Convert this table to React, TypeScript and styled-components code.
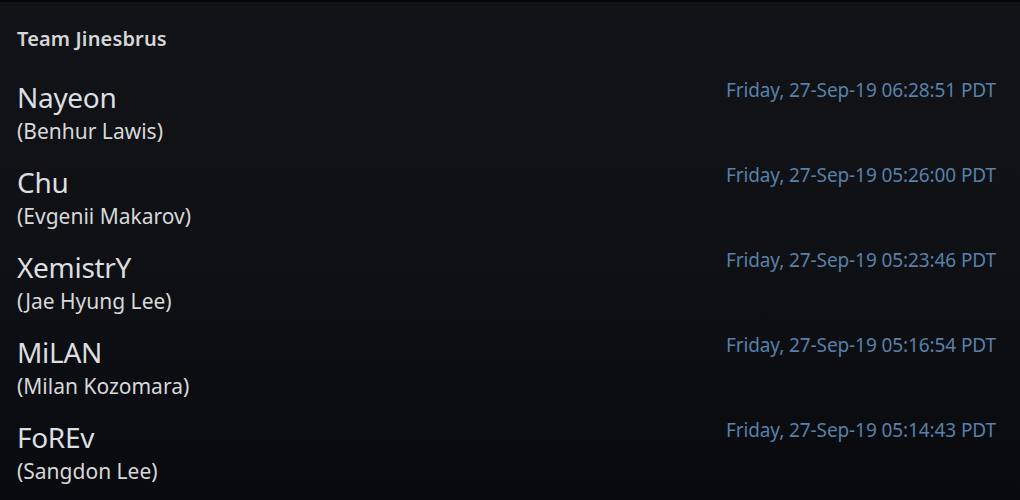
import React from 'react';
import styled, { createGlobalStyle } from 'styled-components';

const GlobalStyle = createGlobalStyle`
  html, body {
    margin: 0;
    padding: 0;
    background: #0b0d10;
  }
`;

const Panel = styled.div`
  width: 1020px;
  height: 500px;
  box-sizing: border-box;
  overflow: hidden;
  border-top: 2px solid #050505;
  background: linear-gradient(180deg, #111317 0%, #0e1014 55%, #090a0d 100%);
  font-family: 'Noto Sans', 'Open Sans', sans-serif;
  padding: 23px 24px 0 17px;
`;

const Title = styled.h2`
  margin: 0 0 27px 0;
  font-size: 20px;
  line-height: 28px;
  font-weight: 600;
  color: #d4d6d8;
  letter-spacing: 0.15px;
`;

const List = styled.div`
  display: flex;
  flex-direction: column;
  gap: 17px;
`;

const Row = styled.div`
  display: flex;
  justify-content: space-between;
  align-items: flex-start;
`;

const Names = styled.div`
  display: flex;
  flex-direction: column;
`;

const Nick = styled.span`
  font-size: 28px;
  line-height: 34px;
  color: #dcdee0;
  letter-spacing: -0.3px;
`;

const RealName = styled.span`
  font-size: 21px;
  line-height: 34px;
  color: #d6d8da;
  letter-spacing: 0;
`;

const Stamp = styled.span`
  font-size: 19px;
  line-height: 20px;
  color: #5880aa;
  letter-spacing: -0.1px;
`;

const players = [
  { nick: 'Nayeon', name: 'Benhur Lawis', time: '06:28:51' },
  { nick: 'Chu', name: 'Evgenii Makarov', time: '05:26:00' },
  { nick: 'XemistrY', name: 'Jae Hyung Lee', time: '05:23:46' },
  { nick: 'MiLAN', name: 'Milan Kozomara', time: '05:16:54' },
  { nick: 'FoREv', name: 'Sangdon Lee', time: '05:14:43' },
];

export default function App() {
  return (
    <>
      <GlobalStyle />
      <Panel>
        <Title>Team Jinesbrus</Title>
        <List>
          {players.map(p => (
            <Row key={p.nick}>
              <Names>
                <Nick>{p.nick}</Nick>
                <RealName>({p.name})</RealName>
              </Names>
              <Stamp>Friday, 27-Sep-19 {p.time} PDT</Stamp>
            </Row>
          ))}
        </List>
      </Panel>
    </>
  );
}
